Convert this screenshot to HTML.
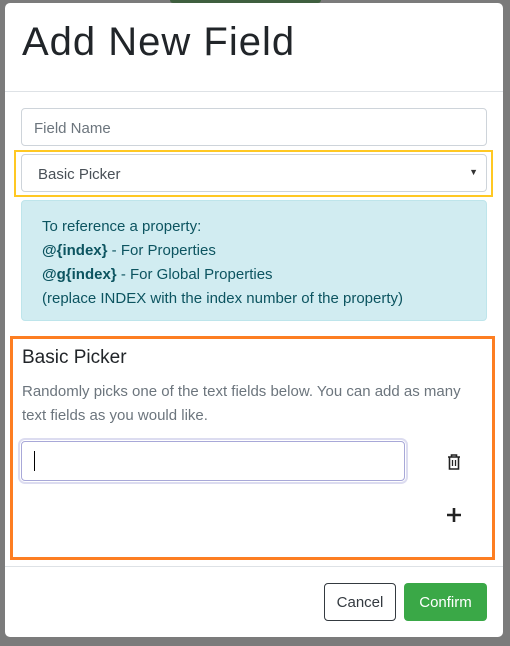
<!DOCTYPE html>
<html><head><style>
*{box-sizing:border-box;margin:0;padding:0}
body{width:510px;height:646px;background:#7b7b7b;font-family:"Liberation Sans",sans-serif;position:relative;overflow:hidden;color:#212529}
.abs{position:absolute}
.modal{left:5px;top:3px;width:498px;height:634px;background:#fff;border-radius:5px}
.inp{border:1px solid #ced4da;border-radius:4px;background:#fff;font-size:15px}
</style></head><body>
<div class="abs" style="left:170px;top:0;width:151px;height:3px;background:#3f5f3f;border-radius:0 0 4px 4px"></div>
<div class="abs modal"></div>
<div class="abs" style="left:22px;top:20px;font-size:40px;letter-spacing:1px;color:#212529">Add New Field</div>
<div class="abs" style="left:5px;top:91px;width:498px;height:1px;background:#dee2e6"></div>
<div class="abs inp" style="left:21px;top:108px;width:466px;height:38px;padding:11px 12px;color:#6c757d">Field Name</div>
<div class="abs" style="left:14px;top:150px;width:479px;height:47px;border:2px solid #ffc823"></div>
<div class="abs inp" style="left:21px;top:154px;width:466px;height:38px;padding:11px 16px;color:#495057">Basic Picker<span style="position:absolute;right:8px;top:12px;font-size:9px;color:#333">▼</span></div>
<div class="abs" style="left:21px;top:200px;width:466px;height:121px;background:#d1ecf1;border:1px solid #bee5eb;border-radius:4px;color:#0c5460;font-size:15px;line-height:24px;padding:14px 20px">
To reference a property:<br><b>@{index}</b> - For Properties<br><b>@g{index}</b> - For Global Properties<br>(replace INDEX with the index number of the property)</div>
<div class="abs" style="left:10px;top:336px;width:485px;height:224px;border:3px solid #fd7e22"></div>
<div class="abs" style="left:22px;top:347px;font-size:19px">Basic Picker</div>
<div class="abs" style="left:22px;top:380px;width:455px;font-size:15px;line-height:24px;color:#6c757d">Randomly picks one of the text fields below. You can add as many text fields as you would like.</div>
<div class="abs" style="left:20px;top:440px;width:386px;height:42px;border-radius:5px;box-shadow:0 0 0 2px #dcdcf0"></div>
<div class="abs inp" style="left:21px;top:441px;width:384px;height:40px;border-color:#a8a8d8"></div>
<div class="abs" style="left:34px;top:451px;width:1px;height:20px;background:#000"></div>
<svg class="abs" style="left:446px;top:453px" width="16" height="18" viewBox="0 0 16 18"><path d="M2 4h12M5.5 4V2h5v2M3.5 4.5v11.5h9V4.5" fill="none" stroke="#222" stroke-width="1.6"/><path d="M6.5 7v6M9.5 7v6" stroke="#222" stroke-width="1.3"/></svg>
<svg class="abs" style="left:446px;top:507px" width="16" height="16"><path d="M8 1v14M1 8h14" stroke="#222" stroke-width="2.6"/></svg>
<div class="abs" style="left:5px;top:566px;width:498px;height:1px;background:#dee2e6"></div>
<div class="abs" style="left:324px;top:583px;width:72px;height:38px;border:1px solid #343a40;border-radius:4px;font-size:15px;color:#343a40;text-align:center;line-height:38px">Cancel</div>
<div class="abs" style="left:404px;top:583px;width:83px;height:38px;background:#3aa847;border-radius:4px;font-size:15px;color:#fff;text-align:center;line-height:39px">Confirm</div>
</body></html>
